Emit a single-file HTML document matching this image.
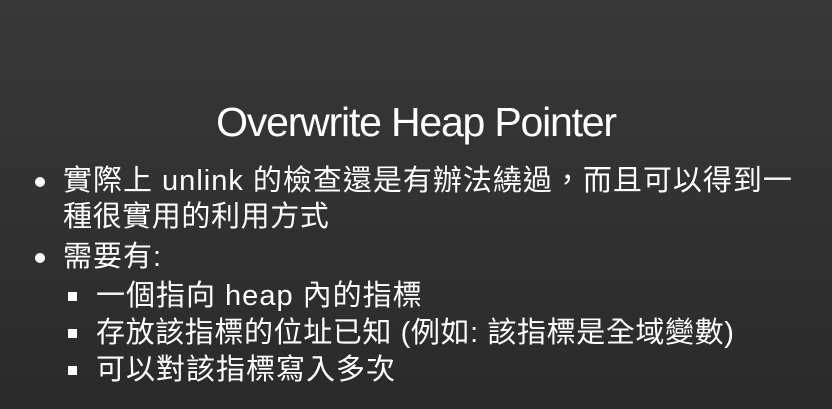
<!DOCTYPE html>
<html><head><meta charset="utf-8"><style>
html,body{margin:0;padding:0}
body{width:832px;height:409px;overflow:hidden;background:linear-gradient(180deg,#383838 0%,#303030 60%,#2a2a2a 100%);color:#fff;font-family:"Liberation Sans","Noto Sans CJK TC",sans-serif;position:relative}
.t{position:absolute;left:0;width:832px;text-align:center;top:99px;font-size:41px;line-height:46px;letter-spacing:-1.2px}
.l{position:absolute;white-space:nowrap;font-size:29px;line-height:36px;letter-spacing:1px}
.b{position:absolute;width:10px;height:10px;border-radius:50%;background:#fff}
.s{position:absolute;width:9px;height:9px;background:#fff}
</style></head><body>
<div class="t">Overwrite Heap Pointer</div>
<div class="b" style="left:35px;top:177px"></div>
<div class="l" style="left:63px;top:163px">實際上 unlink 的檢查還是有辦法繞過，而且可以得到一</div>
<div class="l" style="left:63px;top:199px;letter-spacing:0.6px">種很實用的利用方式</div>
<div class="b" style="left:35px;top:253px"></div>
<div class="l" style="left:63px;top:239px">需要有:</div>
<div class="s" style="left:68px;top:292px"></div>
<div class="l" style="left:96px;top:278px">一個指向 heap 內的指標</div>
<div class="s" style="left:68px;top:329px"></div>
<div class="l" style="left:96px;top:315px;letter-spacing:0.6px">存放該指標的位址已知 (例如: 該指標是全域變數)</div>
<div class="s" style="left:68px;top:366px"></div>
<div class="l" style="left:96px;top:352px">可以對該指標寫入多次</div>
</body></html>
